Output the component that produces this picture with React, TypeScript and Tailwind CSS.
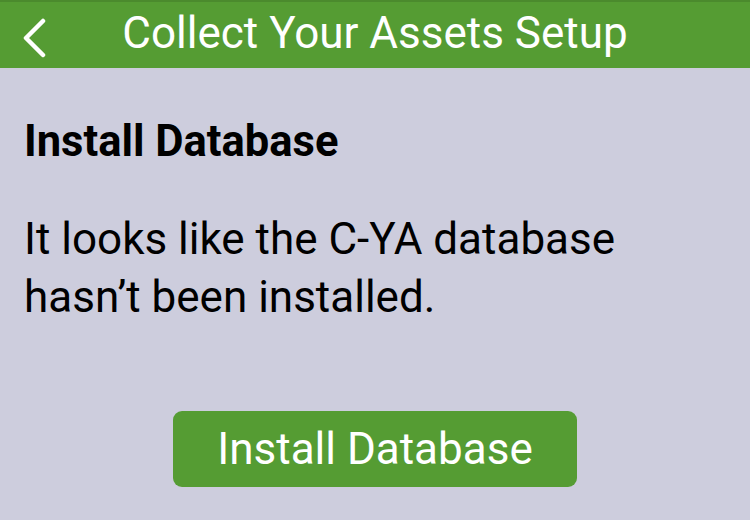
export default function App() {
  return (
    <div className="w-[750px] h-[520px] bg-[#cdcddd] overflow-hidden" style={{ fontFamily: "Roboto, sans-serif" }}>
      <div className="h-[68px] bg-[#559c33] border-t-2 border-[#4b8a2d] pt-[9px] relative">
        <svg className="absolute left-[22px] top-[16px]" width="28" height="40" viewBox="0 0 28 40">
          <path d="M21 3 L4 20 L21 37" fill="none" stroke="white" strokeWidth="4.5" strokeLinecap="round" strokeLinejoin="round" />
        </svg>
        <div className="w-full text-center text-white text-[44px] leading-none">Collect Your Assets Setup</div>
      </div>
      <div className="px-[24px]">
        <div className="mt-[50px] text-[43.5px] font-bold text-black leading-[48px]">Install Database</div>
        <div className="mt-[44px] text-[44px] text-black leading-[58px]">It looks like the C-YA database<br />hasn’t been installed.</div>
        <div className="flex justify-center mt-[85px]">
          <button className="w-[404px] h-[76px] bg-[#559c33] rounded-[9px] text-white text-[44px] leading-none flex items-center justify-center">Install Database</button>
        </div>
      </div>
    </div>
  );
}
